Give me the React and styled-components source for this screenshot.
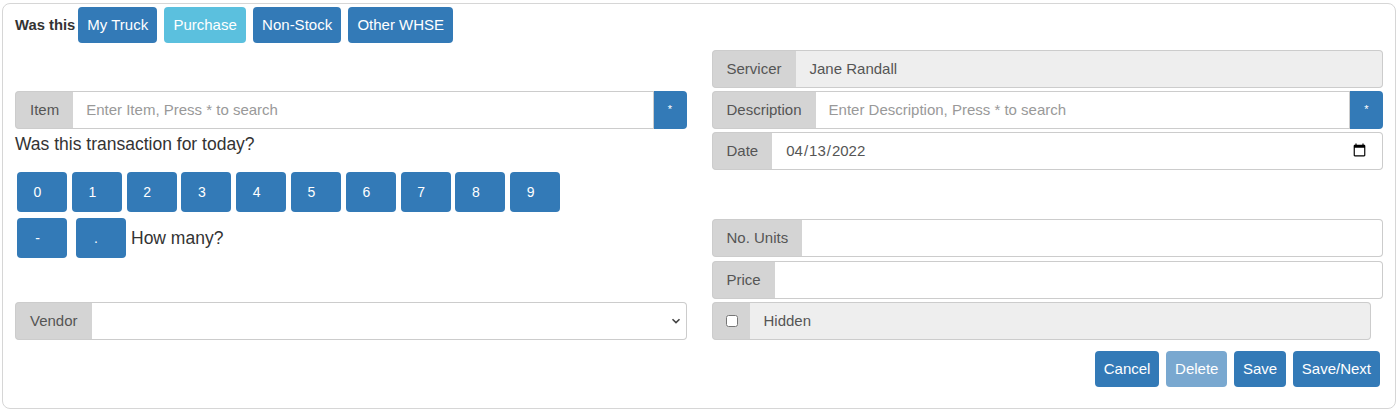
import React, { useState } from 'react'
import styled, { createGlobalStyle } from 'styled-components'

const GlobalStyle = createGlobalStyle`
  body {
    margin: 0;
    background: #fff;
    font-family: "Liberation Sans", Arial, sans-serif;
    color: #333;
  }
  * { box-sizing: border-box; }
`

const Card = styled.div`
  margin: 3px 4px 0 2px;
  height: 406px;
  border: 1px solid #d6d6d6;
  border-radius: 8px;
  padding: 3px 12px 0 12px;
`

const TopBar = styled.div`
  display: flex;
  align-items: center;
  height: 36px;
`

const Lead = styled.span`
  font-weight: bold;
  font-size: 14.8px;
  color: #333;
  margin-right: 3px;
  padding-bottom: 1px;
`

const Choices = styled.div`
  display: flex;
  gap: 7.3px;
`

const Button = styled.button`
  height: ${p => p.$h || 36}px;
  min-width: ${p => p.$w || 0}px;
  padding: ${p => p.$key ? '0 9px 0 0' : '0 9px'};
  padding-bottom: 1px;
  border: none;
  border-radius: 4px;
  background: ${p => p.$info ? '#5bc0de' : '#337ab7'};
  opacity: ${p => p.disabled ? 0.65 : 1};
  color: #fff;
  font-family: inherit;
  font-size: ${p => p.$fs || 15}px;
  cursor: pointer;
`

const Columns = styled.div`
  display: grid;
  grid-template-columns: 1fr 1fr;
  column-gap: 25px;
  margin-top: 7px;
`

const Column = styled.div`
  display: flex;
  flex-direction: column;
`

const Group = styled.div`
  display: flex;
  height: 38px;
  margin-top: ${p => p.$top || 0}px;
  margin-right: ${p => p.$inset || 0}px;
`

const Addon = styled.span`
  display: flex;
  align-items: center;
  padding: 0 14px 1px 14px;
  background: #d4d4d4;
  color: #555;
  font-size: 15px;
  border: 1px solid #ccc;
  border-right: 0;
  border-radius: 4px 0 0 4px;
  white-space: nowrap;
`

const CheckAddon = styled(Addon)`
  width: 38px;
  padding: 0 0 0 13px;
  input { margin: 0; width: 12px; height: 12px; }
`

const Field = styled.input`
  flex: 1;
  min-width: 0;
  height: 100%;
  padding: 0 13px 2px 13px;
  border: 1px solid #ccc;
  border-left: 0;
  background: ${p => p.readOnly ? '#eee' : '#fff'};
  color: #555;
  font-family: inherit;
  font-size: 15px;
  outline: none;
  &:last-child { border-radius: 0 4px 4px 0; }
  &::placeholder { color: #999; }
`

const Static = styled.span`
  flex: 1;
  display: flex;
  align-items: center;
  padding: 0 14px 1px 14px;
  border: 1px solid #ccc;
  border-left: 0;
  border-radius: 0 4px 4px 0;
  background: #eee;
  color: #555;
  font-size: 15px;
`

const SelectBox = styled.label`
  flex: 1;
  display: flex;
  align-items: center;
  padding-right: 5px;
  border: 1px solid #ccc;
  border-left: 0;
  border-radius: 0 4px 4px 0;
  background: #fff;
`

const Select = styled.select`
  flex: 1;
  height: 100%;
  padding: 0 13px;
  border: none;
  appearance: none;
  background: transparent;
  color: #555;
  font-family: inherit;
  font-size: 15px;
  outline: none;
`

const Star = styled.button`
  width: 33px;
  border: none;
  border-radius: 0 4px 4px 0;
  background: #337ab7;
  color: #fff;
  font-size: 11px;
  padding: 0 0 2px 0;
`

const Question = styled.div`
  margin-top: ${p => p.$top || 0}px;
  margin-left: ${p => p.$left || 0}px;
  font-size: 17.5px;
  line-height: 22px;
  color: #333;
`

const Keypad = styled.div`
  display: flex;
  align-items: center;
  gap: ${p => p.$gap || 4.8}px;
  margin-top: ${p => p.$top || 0}px;
  padding-left: 2px;
`

const Actions = styled.div`
  display: flex;
  justify-content: flex-end;
  gap: 6.6px;
  margin: 11px 3px 0 0;
`

const Chevron = () => (
  <svg width="10" height="6" viewBox="0 0 10 6">
    <path d="M1.5 1.2 L5 4.6 L8.5 1.2" fill="none" stroke="#444" strokeWidth="1.6" />
  </svg>
)

const digits = ['0', '1', '2', '3', '4', '5', '6', '7', '8', '9']

const App = () => {
  const [qty, setQty] = useState('')
  const [hidden, setHidden] = useState(false)

  return (
    <>
      <GlobalStyle />
      <Card>
        <TopBar>
          <Lead>Was this</Lead>
          <Choices>
            <Button>My Truck</Button>
            <Button $info>Purchase</Button>
            <Button>Non-Stock</Button>
            <Button>Other WHSE</Button>
          </Choices>
        </TopBar>

        <Columns>
          <Column>
            <Group $top={41}>
              <Addon>Item</Addon>
              <Field placeholder="Enter Item, Press * to search" />
              <Star>*</Star>
            </Group>
            <Question $top={4}>Was this transaction for today?</Question>
            <Keypad $top={17}>
              {digits.map(d => (
                <Button key={d} $key $w={50} $h={40} $fs={14} onClick={() => setQty(qty + d)}>{d}</Button>
              ))}
            </Keypad>
            <Keypad $top={6} $gap={8.5}>
              <Button $key $w={50} $h={40} $fs={14}>-</Button>
              <Button $key $w={50} $h={40} $fs={14}>.</Button>
              <Question $left={-3}>How many?</Question>
            </Keypad>
            <Group $top={44}>
              <Addon>Vendor</Addon>
              <SelectBox>
                <Select defaultValue="">
                  <option value=""></option>
                </Select>
                <Chevron />
              </SelectBox>
            </Group>
          </Column>

          <Column>
            <Group>
              <Addon>Servicer</Addon>
              <Static>Jane Randall</Static>
            </Group>
            <Group $top={3}>
              <Addon>Description</Addon>
              <Field placeholder="Enter Description, Press * to search" />
              <Star>*</Star>
            </Group>
            <Group $top={3}>
              <Addon>Date</Addon>
              <Field type="date" defaultValue="2022-04-13" />
            </Group>
            <Group $top={49}>
              <Addon>No. Units</Addon>
              <Field value={qty} onChange={e => setQty(e.target.value)} />
            </Group>
            <Group $top={4}>
              <Addon>Price</Addon>
              <Field />
            </Group>
            <Group $top={3} $inset={12}>
              <CheckAddon>
                <input type="checkbox" checked={hidden} onChange={e => setHidden(e.target.checked)} />
              </CheckAddon>
              <Static>Hidden</Static>
            </Group>
            <Actions>
              <Button>Cancel</Button>
              <Button disabled>Delete</Button>
              <Button>Save</Button>
              <Button>Save/Next</Button>
            </Actions>
          </Column>
        </Columns>
      </Card>
    </>
  )
}

export default App
